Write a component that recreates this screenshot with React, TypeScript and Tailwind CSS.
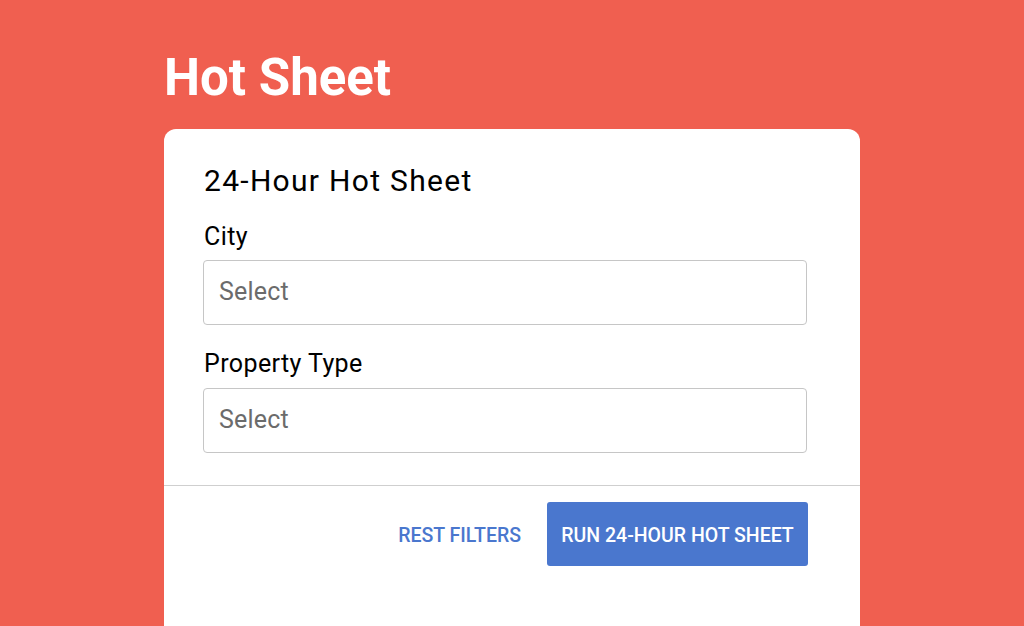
export default function App() {
  return (
    <div className="h-[626px] w-full overflow-hidden bg-[#f05f50] font-['Roboto',sans-serif]">
      <div className="ml-[164px] w-[696px]">
        <h1 className="pt-[48px] text-[51px] font-bold leading-[60px] text-white">Hot Sheet</h1>
        <div className="mt-[21px] h-[600px] rounded-t-[12px] bg-white">
          <div className="pl-[39px] pr-[53px] pt-[34px]">
            <h2 className="pl-px text-[30px] leading-[36px] tracking-[1.3px] text-black">24-Hour Hot Sheet</h2>
            <label className="mt-[23px] block pl-px text-[25px] leading-[30px] tracking-[0.4px] text-black">City</label>
            <div className="mt-[8px] flex h-[65px] items-center rounded-[4px] border border-[#c6c6c6] px-[15px] pb-[2px] text-[25px] tracking-[0.2px] text-[#6b6b6b]">
              Select
            </div>
            <label className="mt-[24px] block pl-px text-[25px] leading-[30px] tracking-[0.4px] text-black">Property Type</label>
            <div className="mt-[9px] flex h-[65px] items-center rounded-[4px] border border-[#c6c6c6] px-[15px] pb-[2px] text-[25px] tracking-[0.2px] text-[#6b6b6b]">
              Select
            </div>
          </div>
          <div className="mt-[32px] h-px bg-[#cfcfcf]" />
          <div className="flex items-center justify-end pr-[52px] pt-[16px]">
            <button className="mr-[26px] pt-[3px] text-[19.5px] font-medium uppercase text-[#4a77ce]">Rest Filters</button>
            <button className="h-[64px] w-[261px] rounded-[3px] bg-[#4a77ce] pt-[3px] text-[19.5px] font-medium uppercase text-white">
              Run 24-Hour Hot Sheet
            </button>
          </div>
        </div>
      </div>
    </div>
  );
}
